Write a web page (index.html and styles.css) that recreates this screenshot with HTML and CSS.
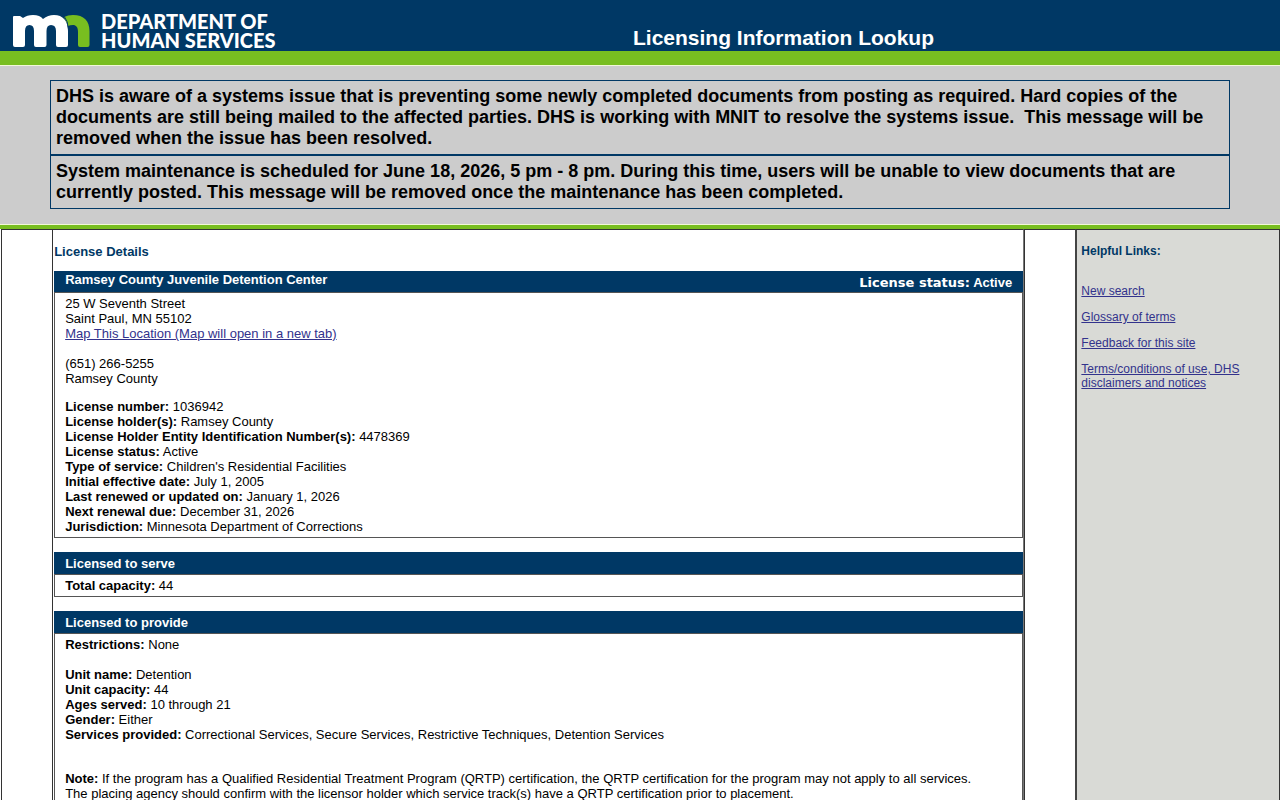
FILE: index.html
```
<!DOCTYPE html>
<html lang="en">
<head>
    <meta charset="UTF-8">
    <meta name="viewport" content="width=device-width, initial-scale=1.0">
    <title>Licensing Information Lookup</title>
    <link rel="stylesheet" href="styles.css">
</head>
<body>

    <header class="header">
        <div class="logo">
            <svg class="logo-mark" viewBox="0 0 77 34" aria-hidden="true">
                <path fill="#78be20" d="M51 3 Q55 1 60 1 C71 1 76.500 7 76.500 17 V31 Q76.500 33 74.500 33 H67 Q65 33 65 31 V18 C65 13 63 11 60 11 Q57 11 55 12 Z"/>
                <path fill="#fff" d="M0 3 Q0 2 1 2 H7 L10 4 Q14 1 20 1 Q27 1 30 5 Q35 1 41 1 C50 1 55 7 55 17 V31 Q55 33 53 33 H45 Q43 33 43 31 V17 Q43 11 38 11 Q33.500 11 33.500 17 V31 Q33.500 33 31.500 33 H23 Q21 33 21 31 V17 Q21 11 16.500 11 Q12 11 12 17 V31 Q12 33 10 33 H2 Q0 33 0 31 Z"/>
                <path fill="none" stroke="#003865" d="M51 2 Q55 7 55.500 15 V33"/>
            </svg>
            <div class="logo-text">DEPARTMENT OF<br>HUMAN SERVICES</div>
        </div>
        <h1 class="title">Licensing Information Lookup</h1>
    </header>

    <section class="alerts">
        <div class="alert">DHS is aware of a systems issue that is preventing some newly completed documents from posting as required. Hard copies of the documents are still being mailed to the affected parties. DHS is working with MNIT to resolve the systems issue.&nbsp; This message will be removed when the issue has been resolved.</div>
        <div class="alert">System maintenance is scheduled for June 18, 2026, 5 pm - 8 pm. During this time, users will be unable to view documents that are currently posted. This message will be removed once the maintenance has been completed.</div>
    </section>

    <div class="content">
        <div class="gutter"></div>

        <main class="main">
            <h2 class="page-heading">License Details</h2>

            <section class="panel">
                <div class="panel-heading facility">
                    <h3>Ramsey County Juvenile Detention Center</h3>
                    <div class="status"><span class="status-label">License status:</span> Active</div>
                </div>
                <div class="panel-body">
                    <p>
                        25 W Seventh Street<br>
                        Saint Paul, MN 55102<br>
                        <a href="#">Map This Location (Map will open in a new tab)</a><br>
                        <br>
                        (651) 266-5255<br>
                        Ramsey County
                    </p>
                    <p>
                        <b>License number:</b> 1036942<br>
                        <b>License holder(s):</b> Ramsey County<br>
                        <b>License Holder Entity Identification Number(s):</b> 4478369<br>
                        <b>License status:</b> Active<br>
                        <b>Type of service:</b> Children's Residential Facilities<br>
                        <b>Initial effective date:</b> July 1, 2005<br>
                        <b>Last renewed or updated on:</b> January 1, 2026<br>
                        <b>Next renewal due:</b> December 31, 2026<br>
                        <b>Jurisdiction:</b> Minnesota Department of Corrections
                    </p>
                </div>
            </section>

            <section class="panel">
                <div class="panel-heading">
                    <h3>Licensed to serve</h3>
                </div>
                <div class="panel-body">
                    <p><b>Total capacity:</b> 44</p>
                </div>
            </section>

            <section class="panel">
                <div class="panel-heading">
                    <h3>Licensed to provide</h3>
                </div>
                <div class="panel-body">
                    <p>
                        <b>Restrictions:</b> None<br>
                        <br>
                        <b>Unit name:</b> Detention<br>
                        <b>Unit capacity:</b> 44<br>
                        <b>Ages served:</b> 10 through 21<br>
                        <b>Gender:</b> Either<br>
                        <b>Services provided:</b> Correctional Services, Secure Services, Restrictive Techniques, Detention Services
                    </p>
                    <p class="note"><b>Note:</b> If the program has a Qualified Residential Treatment Program (QRTP) certification, the QRTP certification for the program may not apply to all services. The placing agency should confirm with the licensor holder which service track(s) have a QRTP certification prior to placement.</p>
                </div>
            </section>
        </main>

        <div class="gutter"></div>

        <aside class="sidebar">
            <h2>Helpful Links:</h2>
            <nav class="links">
                <a href="#">New search</a>
                <a href="#">Glossary of terms</a>
                <a href="#">Feedback for this site</a>
                <a href="#">Terms/conditions of use, DHS disclaimers and notices</a>
            </nav>
        </aside>
    </div>

</body>
</html>
```
FILE: styles.css
```
* {
    box-sizing: border-box;
}

html {
    scrollbar-width: none;
}

body {
    margin: 0;
    background-color: #fff;
    color: #000;
    font-family: "Liberation Sans", Arial, Helvetica, sans-serif;
    font-size: 13px;
    line-height: 15px;
}

h1, h2, h3, p {
    margin: 0;
    font-size: inherit;
}

a {
    color: #32328c;
}

.header {
    display: grid;
    grid-template-columns: 288px 1fr;
    align-items: end;
    padding-left: 13px;
    background-color: #003865;
    border-bottom: 14px solid #78be20;
    color: #fff;
}

.logo {
    display: flex;
    align-items: center;
    gap: 11px;
    padding: 12px 0 1px;
}

.logo-mark {
    flex: none;
    width: 77px;
    height: 34px;
}

.logo-text {
    font-family: Lato, sans-serif;
    font-size: 20px;
    font-weight: 900;
    line-height: 19px;
    white-space: nowrap;
}

.title {
    padding: 0 14px 1px 0;
    font-size: 21px;
    line-height: 25px;
    text-align: center;
}

.alerts {
    padding: 14px 50px 15px;
    background-color: #ccc;
    border-top: 1px solid #f2f8d8;
    border-bottom: 1px solid #f2f8d8;
}

.alert {
    padding: 5px;
    border: 1px solid #003865;
    font-size: 18px;
    font-weight: bold;
    line-height: 21px;
}

.content {
    display: grid;
    grid-template-columns: 4fr 76fr 4fr 16fr;
    min-height: 571px;
    padding-left: 1px;
    border-top: 4px solid #78be20;
}

.gutter,
.main,
.sidebar {
    border-top: 1px solid #333;
    border-left: 1px solid #333;
}

.main {
    padding: 14px 0 14px 1px;
    border-right: 1px solid #777;
}

.page-heading {
    margin-bottom: 12px;
    color: #003865;
}

.panel {
    margin-bottom: 14px;
}

.panel-heading {
    padding: 4px 11px 3px;
    background-color: #003865;
    color: #fff;
}

.facility {
    display: flex;
    justify-content: space-between;
    align-items: flex-start;
    padding: 1px 11px 2px;
}

.status {
    padding-top: 3px;
    font-weight: bold;
}

.status-label {
    font-family: "DejaVu Sans", sans-serif;
}

.panel-body {
    padding: 3px 10px;
    border: 1px solid #555;
}

.panel-body p + p {
    margin-top: 13px;
}

.panel-body p + .note {
    margin-top: 29px;
    padding-right: 18px;
}

.sidebar {
    padding: 14px 4px;
    background-color: #d9dad6;
    border-left: 2px solid #444;
    border-right: 1px solid #333;
    font-size: 12px;
    line-height: 14px;
}

.sidebar h2 {
    margin-bottom: 26px;
    color: #003865;
}

.links {
    display: flex;
    flex-direction: column;
    align-items: flex-start;
    gap: 12px;
}
```
